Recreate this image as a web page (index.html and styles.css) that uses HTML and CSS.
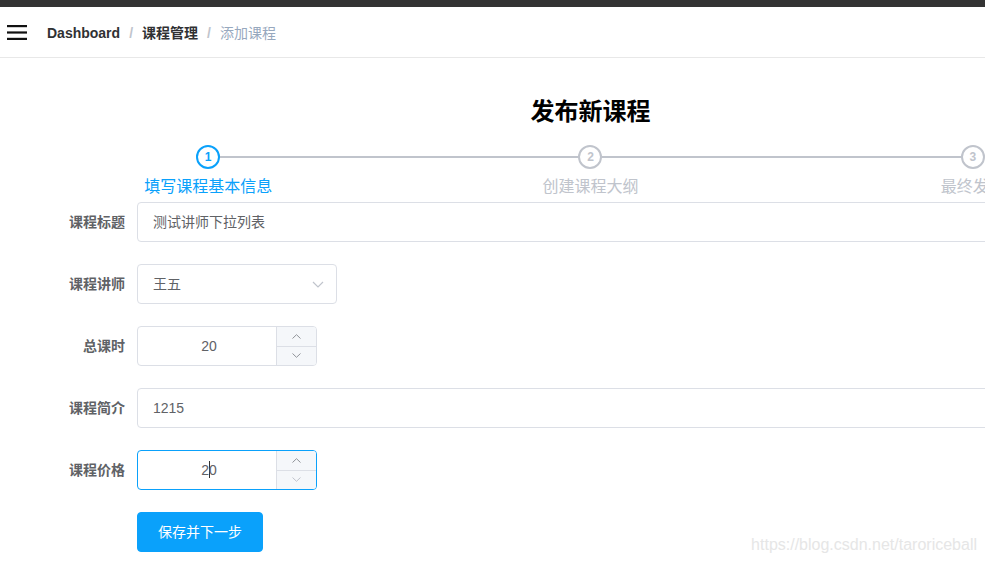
FILE: index.html
```html
<!DOCTYPE html>
<html lang="zh-CN">
<head>
<meta charset="utf-8">
<title>添加课程</title>
<link rel="stylesheet" href="styles.css">
</head>
<body>
<div class="page">
  <div class="topbar"></div>
  <div class="navbar">
    <span class="hamburger">
      <svg width="20" height="15" viewBox="0 0 20 15"><rect x="0" y="0" width="20" height="2.2" fill="#111"/><rect x="0" y="6.4" width="20" height="2.2" fill="#111"/><rect x="0" y="12.8" width="20" height="2.2" fill="#111"/></svg>
    </span>
    <nav class="breadcrumb">
      <span class="crumb strong">Dashboard</span>
      <span class="sep">/</span>
      <span class="crumb strong">课程管理</span>
      <span class="sep">/</span>
      <span class="crumb last">添加课程</span>
    </nav>
  </div>
  <main class="main">
    <h2 class="title">发布新课程</h2>
    <div class="steps">
      <div class="step active">
        <div class="step-head"><span class="step-line"></span><span class="step-icon">1</span></div>
        <div class="step-title">填写课程基本信息</div>
      </div>
      <div class="step">
        <div class="step-head"><span class="step-line"></span><span class="step-icon">2</span></div>
        <div class="step-title">创建课程大纲</div>
      </div>
      <div class="step last">
        <div class="step-head"><span class="step-icon">3</span></div>
        <div class="step-title">最终发布</div>
      </div>
    </div>
    <form class="form">
      <div class="form-item">
        <label class="label">课程标题</label>
        <div class="input wide">测试讲师下拉列表</div>
      </div>
      <div class="form-item">
        <label class="label">课程讲师</label>
        <div class="input select">王五
          <svg class="arrow" width="12" height="7" viewBox="0 0 12 7"><polyline points="1,1 6,6 11,1" fill="none" stroke="#c0c4cc" stroke-width="1.2"/></svg>
        </div>
      </div>
      <div class="form-item">
        <label class="label">总课时</label>
        <div class="number">
          <div class="num-value">20</div>
          <div class="controls">
            <span class="ctrl up"><svg width="9" height="5" viewBox="0 0 9 5"><polyline points="0.5,4.5 4.5,0.7 8.5,4.5" fill="none" stroke="#909399" stroke-width="1"/></svg></span>
            <span class="ctrl down"><svg width="9" height="5" viewBox="0 0 9 5"><polyline points="0.5,0.5 4.5,4.3 8.5,0.5" fill="none" stroke="#909399" stroke-width="1"/></svg></span>
          </div>
        </div>
      </div>
      <div class="form-item">
        <label class="label">课程简介</label>
        <div class="input wide">1215</div>
      </div>
      <div class="form-item">
        <label class="label">课程价格</label>
        <div class="number focus">
          <div class="num-value">2<span class="caret"></span>0</div>
          <div class="controls">
            <span class="ctrl up"><svg width="9" height="5" viewBox="0 0 9 5"><polyline points="0.5,4.5 4.5,0.7 8.5,4.5" fill="none" stroke="#909399" stroke-width="1"/></svg></span>
            <span class="ctrl down"><svg width="9" height="5" viewBox="0 0 9 5"><polyline points="0.5,0.5 4.5,4.3 8.5,0.5" fill="none" stroke="#c0c4cc" stroke-width="1"/></svg></span>
          </div>
        </div>
      </div>
      <div class="form-actions">
        <button type="button" class="btn">保存并下一步</button>
      </div>
    </form>
  </main>
  <div class="watermark">https://blog.csdn.net/taroriceball</div>
</div>
</body>
</html>
```
FILE: styles.css
```css
html, body {
  margin: 0;
  padding: 0;
  overflow: hidden;
  background: #fff;
}
body {
  font-family: "Liberation Sans", "Noto Sans CJK SC", sans-serif;
  font-size: 14px;
  color: #606266;
  width: 985px;
  height: 564px;
  position: relative;
}
.page {
  width: 1180px;
}
.topbar {
  height: 7px;
  background: #333333;
}
.navbar {
  height: 50px;
  border-bottom: 1px solid #e8e8e8;
  display: flex;
  align-items: center;
}
.hamburger {
  display: flex;
  padding-left: 7px;
  margin-top: 1px;
}
.breadcrumb {
  margin-left: 20px;
  margin-top: 2px;
  display: flex;
  align-items: center;
  font-size: 14px;
  line-height: 20px;
}
.crumb.strong {
  font-weight: bold;
  color: #303133;
}
.crumb.last {
  color: #97a8be;
}
.sep {
  margin: 0 9px;
  color: #c0c4cc;
  font-weight: bold;
}
.main {
  padding: 0 16px 0 17px;
}
.title {
  margin: 38px 0 0;
  font-size: 24px;
  line-height: 32px;
  font-weight: bold;
  color: #000;
  text-align: center;
}
.steps {
  margin-top: 17px;
  display: grid;
  grid-template-columns: repeat(3, 1fr);
}
.step {
  display: flex;
  flex-direction: column;
  align-items: center;
  color: #c0c4cc;
}
.step-head {
  position: relative;
  width: 100%;
  height: 24px;
  display: flex;
  justify-content: center;
}
.step-line {
  position: absolute;
  top: 11px;
  left: 50%;
  width: 100%;
  height: 2px;
  background: #c0c4cc;
}
.step-icon {
  position: relative;
  z-index: 1;
  width: 24px;
  height: 24px;
  box-sizing: border-box;
  border: 2px solid #c0c4cc;
  border-radius: 50%;
  background: #fff;
  font-size: 12px;
  font-weight: bold;
  line-height: 20px;
  text-align: center;
  color: #c0c4cc;
}
.step.active .step-icon {
  border-color: #0aa1fb;
  color: #0aa1fb;
}
.step-title {
  margin-top: 6px;
  font-size: 16px;
  line-height: 24px;
}
.step.active .step-title {
  color: #0aa1fb;
}
.form {
  margin-top: 3px;
}
.form-item {
  display: flex;
  height: 40px;
  margin-bottom: 22px;
}
.label {
  width: 120px;
  box-sizing: border-box;
  padding-right: 12px;
  text-align: right;
  line-height: 40px;
  font-weight: bold;
  color: #606266;
  flex: none;
}
.input {
  height: 40px;
  box-sizing: border-box;
  border: 1px solid #dcdfe6;
  border-radius: 4px;
  padding: 0 15px;
  line-height: 38px;
  color: #606266;
  background: #fff;
}
.input.wide {
  flex: 1;
}
.input.select {
  width: 200px;
  position: relative;
}
.arrow {
  position: absolute;
  right: 12px;
  top: 16px;
}
.number {
  width: 180px;
  height: 40px;
  box-sizing: border-box;
  border: 1px solid #dcdfe6;
  border-radius: 4px;
  display: flex;
  overflow: hidden;
}
.number.focus {
  border-color: #0aa1fb;
}
.num-value {
  flex: 1;
  padding-left: 15px;
  padding-right: 11px;
  text-align: center;
  line-height: 38px;
  color: #606266;
}
.caret {
  display: inline-block;
  width: 0;
  height: 17px;
  border-left: 1px solid #333;
  vertical-align: -3px;
  margin: 0 -0.5px;
}
.controls {
  width: 40px;
  box-sizing: border-box;
  flex: none;
  display: flex;
  flex-direction: column;
  border-left: 1px solid #dcdfe6;
  background: #f5f7fa;
}
.ctrl {
  flex: 1;
  display: flex;
  align-items: center;
  justify-content: center;
}
.ctrl.up {
  border-bottom: 1px solid #dcdfe6;
}
.form-actions {
  padding-left: 120px;
}
.btn {
  height: 40px;
  padding: 0 20px;
  border: 1px solid #0aa1fb;
  border-radius: 4px;
  background: #0aa1fb;
  color: #fff;
  font-family: "Liberation Sans", "Noto Sans CJK SC", sans-serif;
  font-size: 14px;
  line-height: 38px;
  cursor: pointer;
}
.watermark {
  position: absolute;
  right: 8px;
  bottom: 9px;
  font-family: "Liberation Sans", sans-serif;
  font-size: 16px;
  line-height: 20px;
  color: #e6e6e6;
}
```
